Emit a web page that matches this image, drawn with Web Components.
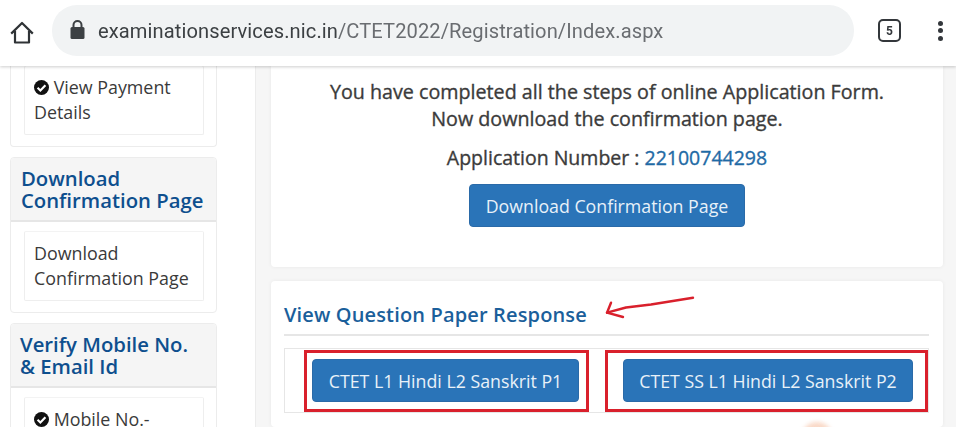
<!DOCTYPE html>
<html lang="en"><head><meta charset="utf-8"><title>CTET</title>
<style>
html,body{margin:0;padding:0;background:#fff}
body{width:956px;height:427px;overflow:hidden;font-family:"Open Sans",sans-serif;color:#333}
</style></head><body>
<app-shell>
  <browser-bar slot="top" url-host="examinationservices.nic.in" url-path="/CTET2022/Registration/Index.aspx" tabs="5"></browser-bar>
  <side-bar slot="side">
    <side-panel flush>
      <side-item flush><check-icon></check-icon> View Payment Details</side-item>
    </side-panel>
    <side-panel heading="Download Confirmation Page" pad="1">
      <side-item>Download Confirmation Page</side-item>
    </side-panel>
    <side-panel heading="Verify Mobile No. &amp; Email Id">
      <side-item><check-icon></check-icon> Mobile No.-</side-item>
    </side-panel>
  </side-bar>
  <main-col slot="main">
    <main-card class="first">
      <p class="a">You have completed all the steps of online Application Form.<br>Now download the confirmation page.</p>
      <p class="b">Application Number : <span style="color:#1f6aa5">22100744298</span></p>
      <blue-button wide>Download Confirmation Page</blue-button>
    </main-card>
    <main-card>
      <response-box></response-box>
    </main-card>
  </main-col>
</app-shell>
<script>
const def=(name,html,init)=>customElements.define(name,class extends HTMLElement{
  constructor(){super();const t=document.createElement('template');t.innerHTML=html;this.attachShadow({mode:'open'}).appendChild(t.content.cloneNode(true));}
  connectedCallback(){init&&init(this,this.shadowRoot)}
});
def('app-shell',`<style>
:host{display:grid;grid-template-columns:256px 1fr;grid-template-rows:66px 361px;width:956px;height:427px;overflow:hidden;position:relative;filter:blur(.35px)}
.t{grid-column:1/3;position:relative;z-index:2;display:block}
</style><div class="t"><slot name="top"></slot></div><slot name="side"></slot><slot name="main"></slot>`);
def('browser-bar',`<style>
:host{display:flex;align-items:center;height:66px;background:#fff;box-shadow:0 1px 3px rgba(0,0,0,.2);box-sizing:border-box;font-family:Roboto,sans-serif;position:relative}
.home{margin-left:10px;width:24px;height:24px;flex:none}
.pill{margin-left:18px;width:802px;height:51px;margin-top:-5px;border-radius:25px;background:#f1f3f4;display:flex;align-items:center;padding-left:18px;box-sizing:border-box;flex:none;font-size:20.100px;letter-spacing:.1px;white-space:nowrap}
.lock{width:15px;height:19px;margin-right:13px;flex:none;margin-top:-2px}
.h{color:#3c4043}.p{color:#6a6d71}
.tabs{margin-left:24px;width:23px;height:23px;box-sizing:border-box;border:2.500px solid #33373b;border-radius:5px;display:flex;align-items:center;justify-content:center;font:700 12px Roboto,sans-serif;color:#33373b;margin-top:-5px;flex:none}
.menu{margin-left:37px;display:flex;flex-direction:column;gap:2.500px;margin-top:-5px}
.menu i{display:block;width:5px;height:5px;border-radius:50%;background:#33373b}
</style>
<svg class="home" viewBox="0 0 24 24" fill="none" stroke="#2f3336" stroke-width="2.200"><path d="M1.200 12.600 12 2 22.800 12.600M5 10v11.500h14V10" stroke-linejoin="round"/></svg>
<div class="pill"><svg class="lock" viewBox="0 0 15 19"><path d="M3.500 8V5a4 4 0 0 1 8 0v3" fill="none" stroke="#3c4043" stroke-width="2"/><rect x=".5" y="7" width="14" height="12" rx="1.500" fill="#3c4043"/></svg><span><span class="h" id="h"></span><span class="p" id="p"></span></span></div>
<div class="tabs" id="n"></div>
<div class="menu"><i></i><i></i><i></i></div>`,(e,s)=>{s.getElementById('h').textContent=e.getAttribute('url-host');s.getElementById('p').textContent=e.getAttribute('url-path');s.getElementById('n').textContent=e.getAttribute('tabs')});
def('side-bar',`<style>:host{display:flex;flex-direction:column;gap:10px;padding:0 38px 0 10px;background:#fff;border-right:1px solid #ececec;box-sizing:border-box;overflow:hidden;height:361px}</style><slot></slot>`);
def('side-panel',`<style>
:host{display:block;border:1px solid #ececec;border-radius:4px;background:#fff;flex:none;box-sizing:border-box}
:host([flush]){border-top:0;border-radius:0 0 4px 4px}
.h{background:#f5f5f5;border-bottom:2px solid #e6e6e6;padding:9px 8px 9px 9px;font-size:20.300px;line-height:22px;font-weight:600;color:#0e4f8e;border-radius:4px 4px 0 0}
:host([pad]) .h{padding-left:10px}
.b{padding:9px 12px 11px 13px}
:host([flush]) .h{display:none}
:host([flush]) .b{padding-top:0;padding-bottom:11px}
</style><div class="h" id="h"></div><div class="b"><slot></slot></div>`,(e,s)=>{s.getElementById('h').textContent=e.getAttribute('heading')||''});
def('side-item',`<style>
:host{display:block;border:1px solid #eee;border-top-color:#f3f3f3;background:#fff;padding:9px 6px 9px 9px;font-size:17.850px;line-height:25px;color:#3a3a3a;border-radius:2px}
:host([flush]){border-top:0;padding-top:9px}
</style><slot></slot>`);
def('check-icon',`<style>:host{display:inline-block;width:15px;height:15px;vertical-align:-1px}svg{display:block}</style>
<svg viewBox="0 0 16 16" width="15" height="15"><circle cx="8" cy="8" r="8" fill="#111"/><path d="M3.800 8.300 6.800 11.200 12.200 5.600" fill="none" stroke="#fff" stroke-width="2.300"/></svg>`);
def('main-col',`<style>:host{display:flex;flex-direction:column;gap:14px;background:#f6f6f6;padding:0 13px 0 15px;box-sizing:border-box;height:361px;overflow:hidden}</style><slot></slot>`);
def('main-card',`<style>
:host{display:block;background:#fff;border-radius:4px;box-shadow:0 0 4px rgba(0,0,0,.06);flex:none;text-align:center;box-sizing:border-box}
:host(.first){height:201px;padding-top:12px;border-radius:0 0 4px 4px}
::slotted(p){margin:0}
::slotted(p.a){font-size:19.700px;line-height:27px;-webkit-text-stroke:.35px currentColor;color:#3b3b3b}
::slotted(p.b){font-size:19.500px;line-height:27px;-webkit-text-stroke:.35px currentColor;color:#3b3b3b;margin-top:12px;margin-bottom:13px}
</style><slot></slot>`);
def('blue-button',`<style>
:host{display:inline-flex;align-items:center;justify-content:center;height:43px;background:#2a74b8;border:1px solid #2a6aa8;box-sizing:border-box;border-radius:4px;color:#e8f1f8;font-size:17.750px;line-height:40px;font-family:"Open Sans",sans-serif;white-space:nowrap;flex:none}
:host([wide]){width:276px}
</style><slot></slot>`);
def('response-box',`<style>
:host{display:block;position:relative;height:146px;padding:0 14px 0 13px;text-align:left}
h2{margin:0;font-size:20px;line-height:27px;font-weight:600;color:#1b5f9b;padding-top:20px;padding-bottom:6px;border-bottom:2px solid #e6e6e6;height:27px;box-sizing:content-box;letter-spacing:.15px}
.tb{margin-top:12px;height:65px;box-sizing:border-box;border:1px solid #e6e6e6;display:flex;align-items:flex-end;padding-left:19px}
.r{box-sizing:border-box;height:62px;border:3px solid #d9202c;display:flex;align-items:flex-start;padding-top:6px;flex:none}
.r1{width:285px;padding-left:5px;padding-right:5px;margin-right:16px}
.r2{width:323px;padding-left:15px}
.arrow{position:absolute;left:320px;top:8px;overflow:visible}
.blob{position:absolute;left:530px;top:141px;width:32px;height:32px;border-radius:50%;background:#f7c9b0;opacity:.7;filter:blur(2px)}
</style>
<h2>View Question Paper Response</h2>
<div class="tb"><div class="r r1"><blue-button style="width:267px">CTET L1 Hindi L2 Sanskrit P1</blue-button></div><div class="r r2"><blue-button style="width:290px">CTET SS L1 Hindi L2 Sanskrit P2</blue-button></div></div>
<svg class="arrow" width="110" height="32" viewBox="0 0 110 32" fill="none" stroke="#d9202c" stroke-width="2.400" stroke-linecap="round" stroke-linejoin="round"><path d="M102 8.700 L60 15.500 L35 18.500 L16 23.700"/><path d="M20 13.700 L16 23.700 L32 28"/></svg>
<div class="blob"></div>`);
</script>
</body></html>
